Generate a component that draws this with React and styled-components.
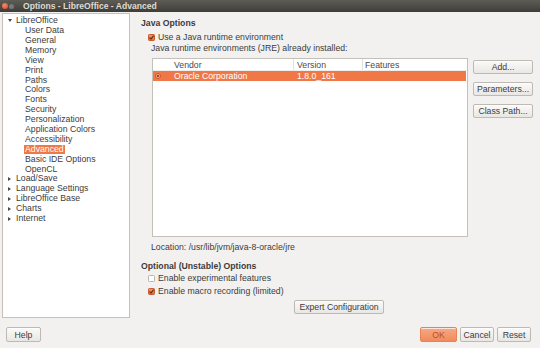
import React from "react";
import styled, { createGlobalStyle } from "styled-components";

const GlobalStyle = createGlobalStyle`
  html, body { margin: 0; padding: 0; background: #f2f1f0; }
  body { font-family: "Liberation Sans", Arial, sans-serif; font-size: 8.7px; color: #3c3c3c; }
  * { box-sizing: border-box; }
`;

const Window = styled.div`
  width: 540px;
  height: 348px;
  display: flex;
  flex-direction: column;
  background: #f2f1f0;
  overflow: hidden;
`;

const TitleBar = styled.div`
  height: 12px;
  flex: none;
  display: flex;
  align-items: center;
  background: linear-gradient(#5d5c57, #3e3d39);
  padding-left: 2px;
`;

const Dot = styled.span`
  width: ${(p) => p.$size}px;
  height: ${(p) => p.$size}px;
  border-radius: 50%;
  margin-right: ${(p) => p.$gap}px;
  background: ${(p) => p.$color};
  flex: none;
`;

const Title = styled.span`
  font-weight: bold;
  font-size: 8.6px;
  color: #dfdbd2;
  white-space: nowrap;
`;

const Main = styled.div`
  display: flex;
  padding: 1px 0 0 2px;
  height: 306px;
  flex: none;
`;

const Tree = styled.div`
  width: 128px;
  height: 305px;
  background: #fff;
  border: 1px solid #c4c1bb;
  padding-top: 2px;
  flex: none;
`;

const TreeItem = styled.div`
  height: 9.9px;
  line-height: 9.9px;
  display: flex;
  align-items: center;
  padding-left: ${(p) => (p.$child ? 21 : 4)}px;
  white-space: nowrap;
`;

const Arrow = styled.span`
  width: 8px;
  flex: none;
  display: flex;
  align-items: center;
  justify-content: flex-start;
  padding-left: 1px;
`;

const ItemText = styled.span`
  padding: 0 1px;
  height: 9.5px;
  line-height: 9.5px;
  background: ${(p) => (p.$selected ? "#f07746" : "transparent")};
  color: ${(p) => (p.$selected ? "#fff" : "#3c3c3c")};
`;

const Content = styled.div`
  flex: 1;
  display: flex;
  flex-direction: column;
  padding-left: 11px;
`;

const SectionTitle = styled.div`
  font-weight: bold;
  height: 10px;
  line-height: 10px;
  margin-top: ${(p) => p.$mt}px;
  white-space: nowrap;
`;

const CheckRow = styled.label`
  display: flex;
  align-items: center;
  height: 10px;
  margin-top: ${(p) => p.$mt}px;
  padding-left: 7px;
  gap: 3px;
  white-space: nowrap;
`;

const Text = styled.div`
  height: 10px;
  line-height: 10px;
  margin-top: ${(p) => p.$mt}px;
  padding-left: 10px;
  white-space: nowrap;
`;

const TableRow = styled.div`
  display: flex;
  margin-top: 5px;
`;

const Table = styled.div`
  margin-left: 11px;
  width: 316px;
  height: 179px;
  background: #fff;
  border: 1px solid #c4c1bb;
  display: flex;
  flex-direction: column;
`;

const Cols = styled.div`
  display: grid;
  grid-template-columns: 140px 69px 1fr;
  height: ${(p) => p.$h}px;
  align-items: center;
  background: ${(p) => (p.$selected ? "#f07746" : "transparent")};
  color: ${(p) => (p.$selected ? "#fff" : "#4a4a4a")};
  margin-right: ${(p) => (p.$selected ? 1 : 0)}px;
  border-bottom: ${(p) => (p.$header ? "1px solid #eeedeb" : "none")};
`;

const Cell = styled.div`
  display: flex;
  align-items: center;
  height: 100%;
  padding-left: ${(p) => p.$pl}px;
  border-left: ${(p) => (p.$sep ? "1px solid #e3e1dd" : "none")};
  white-space: nowrap;
`;

const Radio = styled.span`
  width: 6px;
  height: 6px;
  border-radius: 50%;
  background: #f6a985;
  border: 1px solid #c9582a;
  display: flex;
  align-items: center;
  justify-content: center;
  margin-right: 13px;
  margin-left: -19px;
  &::after {
    content: "";
    width: 2px;
    height: 2px;
    border-radius: 50%;
    background: #6e2b10;
  }
`;

const SideButtons = styled.div`
  display: flex;
  flex-direction: column;
  gap: 8px;
  margin-left: 5px;
  padding-top: 2px;
`;

const Button = styled.button`
  font-family: inherit;
  font-size: 8.7px;
  width: ${(p) => p.$w}px;
  height: ${(p) => p.$h || 14}px;
  padding: 0;
  color: ${(p) => (p.$primary ? "#b9501f" : "#3c3c3c")};
  background: ${(p) =>
    p.$primary
      ? "linear-gradient(#f8a884, #f18a5c)"
      : "linear-gradient(#fbfaf9, #e9e7e4)"};
  border: 1px solid ${(p) => (p.$primary ? "#e58256" : "#bdbab4")};
  border-radius: 2px;
  box-shadow: 0 1px 0 rgba(255, 255, 255, 0.7) inset;
  white-space: nowrap;
  flex: none;
`;

const ExpertRow = styled.div`
  margin-top: 4px;
  padding-left: 153px;
  display: flex;
`;

const Footer = styled.div`
  display: flex;
  justify-content: space-between;
  padding: 9px 9px 0 6px;
`;

const Group = styled.div`
  display: flex;
  gap: 3px;
`;

const TriDown = () => (
  <svg width="4" height="3" viewBox="0 0 4 3">
    <path d="M0 0 H4 L2 3 Z" fill="#4a4a4a" />
  </svg>
);
const TriRight = () => (
  <svg width="3" height="4" viewBox="0 0 3 4">
    <path d="M0 0 V4 L3 2 Z" fill="#4a4a4a" />
  </svg>
);

const Check = ({ checked }) => (
  <svg width="7" height="7" viewBox="0 0 7 7" style={{ flex: "none" }}>
    <defs>
      <linearGradient id="cg" x1="0" y1="0" x2="0" y2="1">
        <stop offset="0" stopColor="#f39a6f" />
        <stop offset="1" stopColor="#e06a3a" />
      </linearGradient>
    </defs>
    {checked ? (
      <>
        <rect x="0.5" y="0.5" width="6" height="6" rx="0.8" fill="url(#cg)" stroke="#c85c30" />
        <path d="M1.5 3.6 L3 5 L5.6 1.6" fill="none" stroke="#5a2a16" strokeWidth="1.1" />
      </>
    ) : (
      <rect x="0.5" y="0.5" width="6" height="6" rx="0.8" fill="#fdfdfc" stroke="#b9b6b0" />
    )}
  </svg>
);

const treeItems = [
  { t: "LibreOffice", top: true, open: true },
  { t: "User Data" },
  { t: "General" },
  { t: "Memory" },
  { t: "View" },
  { t: "Print" },
  { t: "Paths" },
  { t: "Colors" },
  { t: "Fonts" },
  { t: "Security" },
  { t: "Personalization" },
  { t: "Application Colors" },
  { t: "Accessibility" },
  { t: "Advanced", sel: true },
  { t: "Basic IDE Options" },
  { t: "OpenCL" },
  { t: "Load/Save", top: true },
  { t: "Language Settings", top: true },
  { t: "LibreOffice Base", top: true },
  { t: "Charts", top: true },
  { t: "Internet", top: true },
];

export default function App() {
  return (
    <>
      <GlobalStyle />
      <Window>
        <TitleBar>
          <Dot $size={6} $gap={1} $color="radial-gradient(circle at 40% 35%, #f58a6a, #d9452a)" />
          <Dot $size={5} $gap={9} $color="#7a7873" />
          <Title>Options - LibreOffice - Advanced</Title>
        </TitleBar>
        <Main>
          <Tree>
            {treeItems.map((it) => (
              <TreeItem key={it.t} $child={!it.top}>
                {it.top && <Arrow>{it.open ? <TriDown /> : <TriRight />}</Arrow>}
                <ItemText $selected={it.sel}>{it.t}</ItemText>
              </TreeItem>
            ))}
          </Tree>
          <Content>
            <SectionTitle $mt={5}>Java Options</SectionTitle>
            <CheckRow $mt={4}>
              <Check checked />
              <span>Use a Java runtime environment</span>
            </CheckRow>
            <Text $mt={1}>Java runtime environments (JRE) already installed:</Text>
            <TableRow>
              <Table>
                <Cols $h={12} $header>
                  <Cell $pl={21}>Vendor</Cell>
                  <Cell $pl={3} $sep>Version</Cell>
                  <Cell $pl={2} $sep>Features</Cell>
                </Cols>
                <Cols $h={10} $selected>
                  <Cell $pl={21}>
                    <Radio />
                    Oracle Corporation
                  </Cell>
                  <Cell $pl={4}>1.8.0_161</Cell>
                  <Cell $pl={3}></Cell>
                </Cols>
              </Table>
              <SideButtons>
                <Button $w={60}>Add...</Button>
                <Button $w={60}>Parameters...</Button>
                <Button $w={60}>Class Path...</Button>
              </SideButtons>
            </TableRow>
            <Text $mt={5}>Location: /usr/lib/jvm/java-8-oracle/jre</Text>
            <SectionTitle $mt={9}>Optional (Unstable) Options</SectionTitle>
            <CheckRow $mt={2}>
              <Check />
              <span>Enable experimental features</span>
            </CheckRow>
            <CheckRow $mt={3}>
              <Check checked />
              <span>Enable macro recording (limited)</span>
            </CheckRow>
            <ExpertRow>
              <Button $w={90}>Expert Configuration</Button>
            </ExpertRow>
          </Content>
        </Main>
        <Footer>
          <Button $w={35} $h={15}>Help</Button>
          <Group>
            <Button $w={37} $h={15} $primary>OK</Button>
            <Button $w={34} $h={15}>Cancel</Button>
            <Button $w={34} $h={15}>Reset</Button>
          </Group>
        </Footer>
      </Window>
    </>
  );
}
